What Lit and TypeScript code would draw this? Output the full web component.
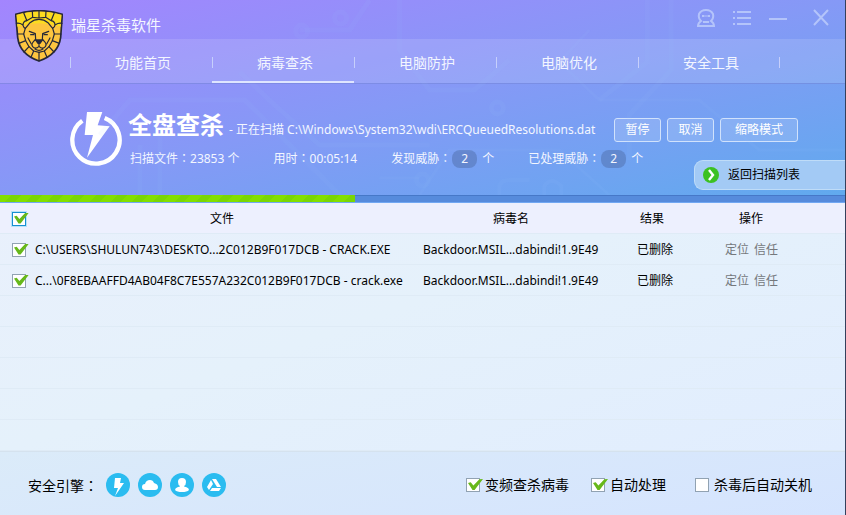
import { LitElement, html, css, svg } from "lit";
import { customElement, property, state } from "lit/decorators.js";
import { classMap } from "lit/directives/class-map.js";

@customElement("tick-box")
class TickBox extends LitElement {
  @property() label = "";
  @property({ type: Boolean }) checked = false;
  @property({ type: Boolean }) hot = false;
  @property({ type: Boolean }) quiet = false;

  static styles = css`
    :host { display: inline-flex; }
    .wrap { display: flex; align-items: center; gap: 5px; font-size: 14px; line-height: 20px; white-space: nowrap; }
    .box {
      appearance: none; position: relative; box-sizing: border-box; flex: none;
      width: 14px; height: 14px; margin: 0; border: 1px solid #91a2b2; background: #fff;
    }
    .box:checked::after {
      content: ""; position: absolute; left: 1px; top: 0; width: 15px; height: 11px; background: #67b81a;
      clip-path: polygon(0 36%, 18% 30%, 36% 58%, 76% 2%, 100% 0, 44% 100%, 30% 100%);
    }
    .hot { border-color: #168fd2; box-shadow: 0 0 0 1px #b7e2f7; }
  `;

  render() {
    return html`<label class="wrap">
      <input class=${classMap({ box: true, hot: this.hot })} type="checkbox" .checked=${this.checked}
        aria-label=${this.label} />
      ${this.quiet ? "" : html`<span>${this.label}</span>`}
    </label>`;
  }
}

const colon = html`<span class="colon">：</span>`;

@customElement("app-root")
class AppRoot extends LitElement {
  @state() private tabs = ["功能首页", "病毒查杀", "电脑防护", "电脑优化", "安全工具"];
  @state() private active = 1;
  @state() private progress = 42;
  @state() private rows = [
    { file: "C:\\USERS\\SHULUN743\\DESKTO...2C012B9F017DCB - CRACK.EXE", virus: "Backdoor.MSIL...dabindi!1.9E49" },
    { file: "C...\\0F8EBAAFFD4AB04F8C7E557A232C012B9F017DCB - crack.exe", virus: "Backdoor.MSIL...dabindi!1.9E49" },
  ];

  static styles = css`
    :host {
      display: flex; flex-direction: column; min-height: 100vh; box-sizing: border-box;
      border-right: 1px solid #34405c;
      font-family: "Noto Sans", "Noto Sans CJK SC", sans-serif; font-size: 12px; line-height: 18px; color: #000;
    }
    button { font: inherit; margin: 0; padding: 0; cursor: pointer; }
    a { color: inherit; text-decoration: none; }
    .colon { font-family: "Noto Sans CJK TC", sans-serif; }
    .top { position: relative; color: #f3f6ff; background: linear-gradient(to bottom right, #a385fe, #8599f6 50%, #61aaee); }
    .circuit { position: absolute; inset: 0; width: 100%; height: 100%; pointer-events: none; }
    .titlebar { display: flex; align-items: center; justify-content: space-between; height: 39px; padding: 0 14px 0 71px; }
    .brand { margin: 0; padding-top: 10px; font-size: 15px; line-height: 20px; font-weight: 400; }
    .logo { position: absolute; left: 15px; top: 10px; width: 48px; height: 52px; }
    .window { display: flex; gap: 16px; padding-bottom: 3px; }
    .window button { display: flex; width: 20px; height: 20px; border: 0; background: none; color: #c0cffc; opacity: 0.8; }
    .window button:last-child { margin-left: 7px; }
    .nav { display: flex; height: 44px; padding-left: 70px; background: rgba(255, 255, 255, 0.13); border-bottom: 1px solid rgba(85, 105, 200, 0.4); }
    .tab {
      position: relative; display: flex; align-items: center; justify-content: center; box-sizing: border-box;
      width: 142px; padding: 3px 0 0 4px; font-size: 14px;
    }
    .tab::before, .tab:last-child::after { content: ""; position: absolute; left: 0; top: 18px; width: 1px; height: 11px; background: #c6cffb; }
    .tab:last-child::after { left: auto; right: 0; }
    .tab.on { box-shadow: inset 0 -2px #dfe5ff; }
    .hero { display: flex; height: 111px; box-sizing: border-box; padding: 24px 47px 0 70px; gap: 6px; }
    .bolt { width: 52px; height: 58px; flex: none; }
    .info { flex: 1; min-width: 0; }
    .line { display: flex; align-items: center; height: 36px; white-space: nowrap; }
    .line h2 { margin: 0 5px 4px 0; font-size: 24px; line-height: 32px; color: #fff; font-family: "Noto Sans CJK SC", sans-serif; }
    .path { flex: 1; padding-top: 8px; }
    .actions { display: flex; gap: 6px; padding-top: 8px; }
    .actions button {
      box-sizing: border-box; height: 24px; min-width: 47px; padding: 0 10px; border: 1px solid #d1e2fc;
      border-radius: 3px; background: rgba(255, 255, 255, 0.15); color: #fff;
    }
    .actions button:last-child { min-width: 78px; }
    .stats { display: flex; gap: 34px; padding: 5px 0 0 2px; white-space: nowrap; }
    .stats b { display: inline-block; width: 25px; margin: 0 5px 0 1px; border-radius: 8px; text-align: center; font-weight: 400; background: rgba(80, 110, 170, 0.5); }
    .back {
      position: absolute; right: 0; top: 160px; display: flex; align-items: center; gap: 9px; box-sizing: border-box;
      width: 151px; height: 30px; padding-left: 8px; border: 1px solid #bfdcf8; border-right: 0; border-radius: 9px 0 0 9px;
      background: #a3caf5; color: #000;
    }
    .back svg { width: 16px; height: 16px; }
    .bar { height: 7px; background: #568bdc; border-bottom: 1px solid #71a8f3; box-shadow: inset 0 1px #4678c8; }
    .fill { height: 7px; background: repeating-linear-gradient(135deg, #83df00 0 8px, #7ad603 8px 15px); }
    .list {
      flex: 1; background:
        repeating-linear-gradient(to bottom, transparent 0 30px, #dfebf6 30px 31px),
        linear-gradient(160deg, #e9f0fc, #e5f1fb 45%, #e1edfe);
    }
    table { width: 100%; table-layout: fixed; border-collapse: collapse; }
    th, td { height: 31px; padding: 0; font-weight: 400; text-align: left; white-space: nowrap; box-sizing: border-box; }
    th { text-align: center; }
    thead tr { background: linear-gradient(#edf0fe 30px, transparent 30px); }
    .c-check { width: 27px; }
    .c-virus { width: 188px; }
    .c-result { width: 94px; }
    .c-ops { width: 104px; }
    .c-rest { width: 42px; }
    .check { padding-left: 12px; line-height: 0; text-align: left; }
    .file { padding-left: 8px; }
    .virus { padding-left: 6px; }
    .result { padding-left: 32px; }
    .ops { padding-left: 26px; color: #74787c; }
    .ops a + a { margin-left: 5px; }
    .foot {
      display: flex; align-items: center; justify-content: space-between; height: 64px; box-sizing: border-box;
      padding: 3px 33px 0 28px; border-top: 1px solid #d5e2ee; background: linear-gradient(170deg, #dbebf9, #d5e4fe);
    }
    .engines { display: flex; align-items: center; gap: 8px; font-size: 14px; }
    .engines svg { width: 24px; height: 24px; }
    .options { display: flex; gap: 22px; }
    .options tick-box:last-child { margin-left: 7px; }
  `;

  private logo() {
    return svg`<svg class="logo" viewBox="45 30 144 156" role="img" aria-label="瑞星">
      <path d="M47 43Q80 32 117 32T187 43L182 112Q175 163 117 183Q59 163 53 112Z" fill="#fdc53f" stroke="#262838" stroke-width="5" stroke-linejoin="round"/>
      <path d="M50 45Q80 35 117 35T184 45L182 80Q150 70 117 70T52 80Z" fill="#fcdc20"/>
      <g fill="none" stroke="#262838" stroke-width="3.6" stroke-linecap="round" stroke-linejoin="round">
        <path d="M80 62L98 52L117 54L137 52L154 62M97 34L98 52M117 32V54M138 34L137 52M71 38L80 61M163 38L154 61M49 70Q58 68 68 74M186 70Q176 68 166 74M52 102H71M183 102H163M57 130L77 122M178 130L157 122M72 156L87 140M162 156L147 140M93 172L101 153M141 172L133 153M117 183V157"/>
        <path d="M80 62Q69 64 69 76Q71 83 76 85L71 102L77 122L87 140L101 153L117 157L133 153L147 140L157 122L163 102L158 85Q165 80 165 74Q164 64 154 62"/>
        <path d="M76 85Q84 76 90 68Q102 58 117 58T144 68Q150 76 158 85"/>
        <path d="M88 94L106 101M146 94L128 101M92 104H102M142 104H132M106 101L107 119M128 101L127 119M84 114L94 132M150 114L140 132"/>
        <path d="M117 130V139Q106 149 98 140Q91 131 106 119M117 139Q128 149 136 140Q143 131 128 119M105 147Q117 155 129 147"/>
      </g>
      <path d="M103 118H131L121 132H113Z" fill="#262838"/>
    </svg>`;
  }

  private circuit() {
    return svg`<svg class="circuit" viewBox="0 0 846 195" preserveAspectRatio="none" aria-hidden="true">
      <g fill="none" stroke="#9fc4ff" stroke-opacity=".07" stroke-width="5">
        <path d="M100 135L130 100H245L280 135L340 195M240 72L275 105L320 145H430M300 30H350L370 0M400 0V50L430 90H475L510 60M672 0V70L630 115V160M648 0V62L600 100M160 195V135M140 195V145"/>
        <path d="M590 30L560 62L600 100H700L760 150H846M420 195L450 150H560L610 195M380 178H420" stroke-width="3"/>
        <circle cx="302" cy="31" r="6"/><circle cx="341" cy="18" r="6"/><circle cx="498" cy="108" r="6"/><circle cx="423" cy="180" r="6"/>
        <path d="M500 195V188Q500 180 510 180H530M545 195V186Q552 176 562 186V195" stroke-width="4"/>
      </g>
    </svg>`;
  }

  render() {
    return html`
      <header class="top">
        ${this.circuit()}
        <div class="titlebar">
          <h1 class="brand">瑞星杀毒软件</h1>
          <div class="window">
            <button aria-label="账户"><svg viewBox="0 0 20 20" fill="none" stroke="currentColor" stroke-width="2"><path d="M5 13Q2 10 3 6Q5 2 10 2T17 6Q18 10 15 13Q18 15 18 18H2Q2 15 5 13ZM7 14H13"/><path d="M6 8H14" stroke-width="1"/><path d="M6 8H8M12 8H14"/></svg></button>
            <button aria-label="菜单"><svg viewBox="0 0 20 20" fill="none" stroke="currentColor" stroke-width="2"><path d="M1 4H3M5 4H19M1 10H3M5 10H19M1 16H3M5 16H19"/></svg></button>
            <button aria-label="最小化"><svg viewBox="0 0 20 20" fill="none" stroke="currentColor" stroke-width="2"><path d="M1 11H19"/></svg></button>
            <button aria-label="关闭"><svg viewBox="0 0 20 20" fill="none" stroke="currentColor" stroke-width="2"><path d="M3 2L17 17M17 2L3 17"/></svg></button>
          </div>
        </div>
        <nav class="nav">
          ${this.tabs.map((t, i) => html`<a href="#" class=${classMap({ tab: true, on: i === this.active })}>${t}</a>`)}
        </nav>
        ${this.logo()}
        <section class="hero">
          <svg class="bolt" viewBox="30 24 156 174" aria-hidden="true">
            <path d="M67 62A71 71 0 1 0 134 54" fill="none" stroke="#fff" stroke-width="13"/>
            <path d="M81 36H127L113 76L149 79L81 173L99 105H74Z" fill="#fff"/>
          </svg>
          <div class="info">
            <div class="line">
              <h2>全盘查杀</h2>
              <span class="path">- 正在扫描 C:\\Windows\\System32\\wdi\\ERCQueuedResolutions.dat</span>
              <div class="actions"><button>暂停</button><button>取消</button><button>缩略模式</button></div>
            </div>
            <div class="stats">
              <span>扫描文件${colon}23853 个</span>
              <span>用时${colon}00:05:14</span>
              <span>发现威胁${colon}<b>2</b>个</span>
              <span>已处理威胁${colon}<b>2</b>个</span>
            </div>
          </div>
        </section>
        <button class="back">
          <svg viewBox="0 0 16 16" aria-hidden="true"><circle cx="8" cy="8" r="8" fill="#3cc122"/><path d="M6 3L10 8L6 13" fill="none" stroke="#fff" stroke-width="2.4"/></svg>
          返回扫描列表
        </button>
      </header>
      <div class="bar" role="progressbar" aria-label="扫描进度" aria-valuenow=${this.progress}>
        <div class="fill" style="width:${this.progress}%"></div>
      </div>
      <main class="list">
        <table>
          <colgroup><col class="c-check" /><col /><col class="c-virus" /><col class="c-result" /><col class="c-ops" /><col class="c-rest" /></colgroup>
          <thead>
            <tr>
              <th class="check"><tick-box label="全选" quiet checked hot></tick-box></th>
              <th>文件</th><th>病毒名</th><th>结果</th><th>操作</th><th></th>
            </tr>
          </thead>
          <tbody>
            ${this.rows.map((r) => html`<tr>
              <td class="check"><tick-box label=${r.file} quiet checked></tick-box></td>
              <td class="file">${r.file}</td>
              <td class="virus">${r.virus}</td>
              <td class="result">已删除</td>
              <td class="ops"><a href="#">定位</a><a href="#">信任</a></td>
              <td></td>
            </tr>`)}
          </tbody>
        </table>
      </main>
      <footer class="foot">
        <div class="engines">
          <span>安全引擎${colon}</span>
          <svg viewBox="0 0 24 24" aria-hidden="true"><circle cx="12" cy="12" r="12" fill="#2bbcf0"/><path d="M9 5H15L14 10H18L9 23L12 15H8Z" fill="#fff"/></svg>
          <svg viewBox="0 0 24 24" aria-hidden="true"><circle cx="12" cy="12" r="12" fill="#2bbcf0"/><path d="M7 17Q4 17 4 14T7 11Q8 7 12 7Q15 7 16 10Q20 11 20 14T17 17Z" fill="#fff"/></svg>
          <svg viewBox="0 0 24 24" aria-hidden="true"><circle cx="12" cy="12" r="12" fill="#2bbcf0"/><path d="M12 5Q16 5 16 9Q16 12 14 13Q14 14 16 14Q19 15 19 17Q17 19 12 19T5 17Q5 15 8 14Q10 14 10 13Q8 12 8 9Q8 5 12 5Z" fill="#fff"/></svg>
          <svg viewBox="0 0 24 24" aria-hidden="true"><circle cx="12" cy="12" r="12" fill="#2bbcf0"/><path d="M10 6H14L19 14H15ZM9 7L11 11L7 17L5 14ZM10 15H19L17 18H8Z" fill="#fff"/></svg>
        </div>
        <div class="options">
          <tick-box label="变频查杀病毒" checked></tick-box>
          <tick-box label="自动处理" checked></tick-box>
          <tick-box label="杀毒后自动关机"></tick-box>
        </div>
      </footer>
    `;
  }
}
